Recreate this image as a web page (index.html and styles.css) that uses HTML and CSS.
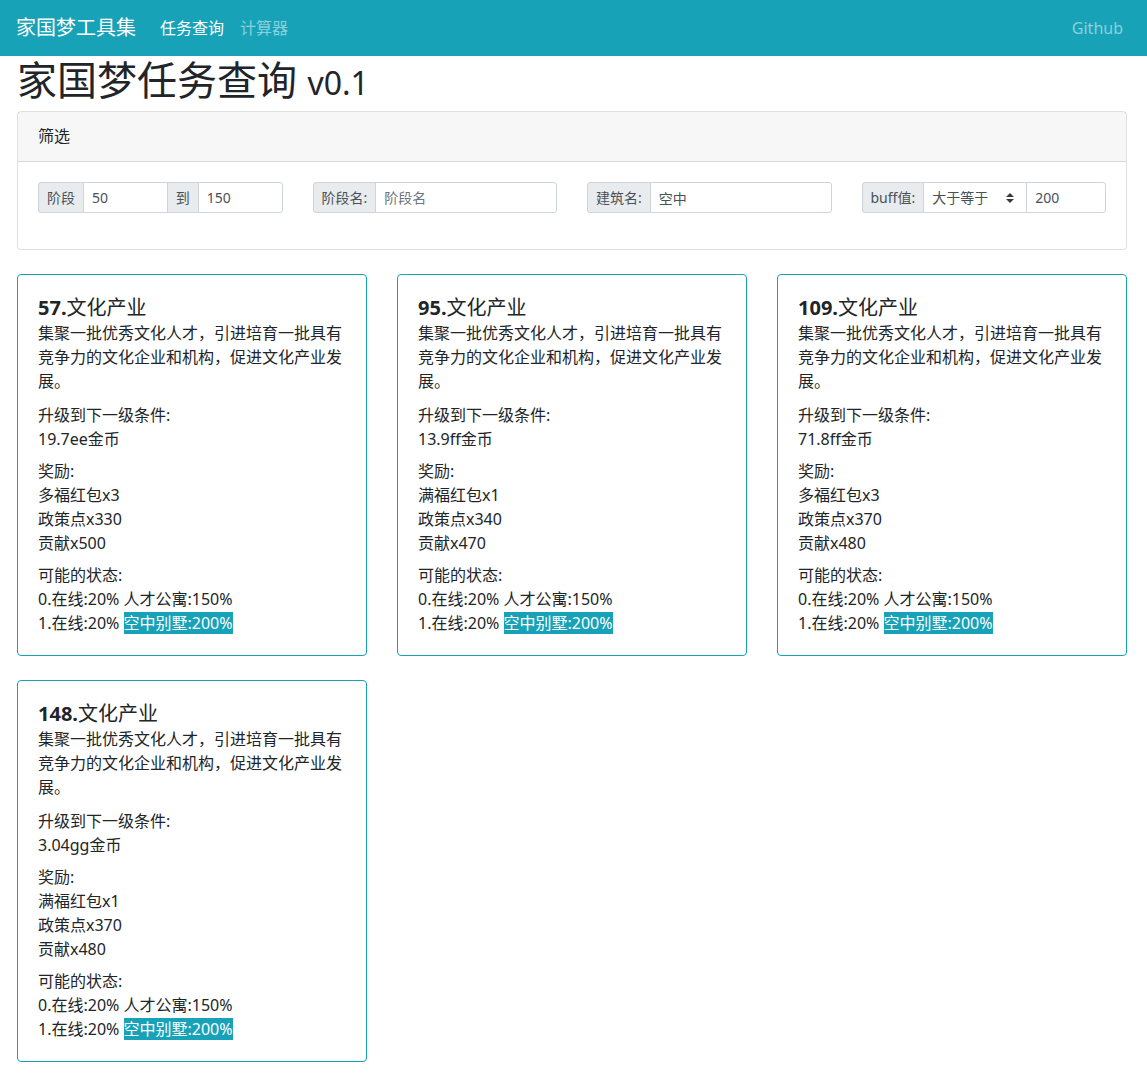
FILE: index.html
```html
<!DOCTYPE html>
<html lang="zh-CN">
<head>
<meta charset="utf-8">
<title>家国梦任务查询</title>
<link rel="stylesheet" href="styles.css">
</head>
<body>
<nav class="navbar">
  <a class="brand" href="#">家国梦工具集</a>
  <a class="nav-link active" href="#">任务查询</a>
  <a class="nav-link" href="#">计算器</a>
  <a class="nav-link github" href="#">Github</a>
</nav>
<main class="page">
  <h1 class="title-main">家国梦任务查询 <small>v0.1</small></h1>
  <section class="filter-card">
    <div class="filter-header">筛选</div>
    <div class="filter-body">
      <div class="input-group">
        <span class="addon">阶段</span>
        <input class="field" value="50">
        <span class="addon">到</span>
        <input class="field" value="150">
      </div>
      <div class="input-group">
        <span class="addon">阶段名:</span>
        <input class="field" placeholder="阶段名">
      </div>
      <div class="input-group">
        <span class="addon">建筑名:</span>
        <input class="field" value="空中">
      </div>
      <div class="input-group">
        <span class="addon">buff值:</span>
        <div class="select">
          <span>大于等于</span>
          <svg class="select-arrow" width="8" height="10" viewBox="0 0 4 5"><path fill="#343a40" d="M2 0L0 2h4zm0 5L0 3h4z"/></svg>
        </div>
        <input class="field" value="200">
      </div>
    </div>
  </section>

  <div class="cards">
    <div class="task-card">
      <div class="task-title"><b>57.</b>文化产业</div>
      <div class="desc">集聚一批优秀文化人才，引进培育一批具有竞争力的文化企业和机构，促进文化产业发展。</div>
      <div class="sec sec-first"><div>升级到下一级条件:</div><div>19.7ee金币</div></div>
      <div class="sec"><div>奖励:</div><div>多福红包x3</div><div>政策点x330</div><div>贡献x500</div></div>
      <div class="sec"><div>可能的状态:</div><div>0.在线:20% 人才公寓:150%</div><div>1.在线:20% <span class="hl">空中别墅:200%</span></div></div>
    </div>
    <div class="task-card">
      <div class="task-title"><b>95.</b>文化产业</div>
      <div class="desc">集聚一批优秀文化人才，引进培育一批具有竞争力的文化企业和机构，促进文化产业发展。</div>
      <div class="sec sec-first"><div>升级到下一级条件:</div><div>13.9ff金币</div></div>
      <div class="sec"><div>奖励:</div><div>满福红包x1</div><div>政策点x340</div><div>贡献x470</div></div>
      <div class="sec"><div>可能的状态:</div><div>0.在线:20% 人才公寓:150%</div><div>1.在线:20% <span class="hl">空中别墅:200%</span></div></div>
    </div>
    <div class="task-card">
      <div class="task-title"><b>109.</b>文化产业</div>
      <div class="desc">集聚一批优秀文化人才，引进培育一批具有竞争力的文化企业和机构，促进文化产业发展。</div>
      <div class="sec sec-first"><div>升级到下一级条件:</div><div>71.8ff金币</div></div>
      <div class="sec"><div>奖励:</div><div>多福红包x3</div><div>政策点x370</div><div>贡献x480</div></div>
      <div class="sec"><div>可能的状态:</div><div>0.在线:20% 人才公寓:150%</div><div>1.在线:20% <span class="hl">空中别墅:200%</span></div></div>
    </div>
    <div class="task-card">
      <div class="task-title"><b>148.</b>文化产业</div>
      <div class="desc">集聚一批优秀文化人才，引进培育一批具有竞争力的文化企业和机构，促进文化产业发展。</div>
      <div class="sec sec-first"><div>升级到下一级条件:</div><div>3.04gg金币</div></div>
      <div class="sec"><div>奖励:</div><div>满福红包x1</div><div>政策点x370</div><div>贡献x480</div></div>
      <div class="sec"><div>可能的状态:</div><div>0.在线:20% 人才公寓:150%</div><div>1.在线:20% <span class="hl">空中别墅:200%</span></div></div>
    </div>
  </div>
</main>
</body>
</html>
```

FILE: styles.css
```css
* { box-sizing: border-box; }

body {
  margin: 0;
  font-family: "Noto Sans", "Noto Sans CJK SC", sans-serif;
  font-size: 16px;
  line-height: 1.5;
  color: #212529;
  background: #fff;
}

a { text-decoration: none; }

.navbar {
  display: flex;
  align-items: center;
  height: 56px;
  padding: 0 16px;
  background: #17a2b8;
}

.brand {
  font-size: 20px;
  line-height: 30px;
  color: #fff;
  margin-right: 16px;
}

.nav-link {
  padding: 8px;
  color: rgba(255, 255, 255, 0.5);
  font-size: 16px;
  line-height: 24px;
}

.nav-link.active { color: #fff; }

.nav-link.github { margin-left: auto; }

.page {
  padding: 0 20px 24px 17px;
}

.title-main {
  margin: 0 0 7px;
  height: 48px;
  font-size: 40px;
  line-height: 48px;
  font-weight: 400;
  color: #212529;
  white-space: nowrap;
}

.title-main small {
  font-size: 32px;
  line-height: 1;
  font-weight: 400;
}

.filter-card {
  border: 1px solid rgba(0, 0, 0, 0.125);
  border-radius: 4px;
}

.filter-header {
  height: 50px;
  padding: 12px 20px;
  background: rgba(0, 0, 0, 0.03);
  border-bottom: 1px solid rgba(0, 0, 0, 0.125);
  font-size: 16px;
  line-height: 24px;
}

.filter-body {
  padding: 20px 20px 36px;
  display: grid;
  grid-template-columns: repeat(4, minmax(0, 1fr));
  column-gap: 30px;
}

.input-group {
  display: flex;
  height: 31px;
  min-width: 0;
  font-size: 14px;
}

.addon {
  flex: 0 0 auto;
  display: flex;
  align-items: center;
  padding: 0 8px;
  background: #e9ecef;
  border: 1px solid #ced4da;
  color: #495057;
  white-space: nowrap;
  margin-left: -1px;
}

.field {
  flex: 1 1 0;
  width: 0;
  min-width: 0;
  height: 31px;
  margin: 0 0 0 -1px;
  padding: 0 8px;
  border: 1px solid #ced4da;
  background: #fff;
  color: #495057;
  font-family: "Noto Sans", "Noto Sans CJK SC", sans-serif;
  font-size: 14px;
  outline: none;
}

.field::placeholder { color: #6c757d; }

.input-group > :first-child {
  margin-left: 0;
  border-radius: 3px 0 0 3px;
}

.input-group > :last-child {
  border-radius: 0 3px 3px 0;
}

.select {
  flex: 0 0 104px;
  display: flex;
  align-items: center;
  justify-content: space-between;
  margin-left: -1px;
  padding: 0 12px 0 8px;
  border: 1px solid #ced4da;
  background: #fff;
  color: #495057;
}

.cards {
  margin-top: 24px;
  display: grid;
  grid-template-columns: repeat(3, 350px);
  column-gap: 30px;
  row-gap: 24px;
}

.task-card {
  border: 1px solid #17a2b8;
  border-radius: 4px;
  padding: 20px;
}

.task-title {
  font-size: 20px;
  line-height: 26px;
  height: 26px;
}

.task-title b { font-weight: 700; }

.sec { margin-top: 8px; }

.sec-first { margin-top: 10px; }

.hl {
  background: #17a2b8;
  color: #fff;
}
```
